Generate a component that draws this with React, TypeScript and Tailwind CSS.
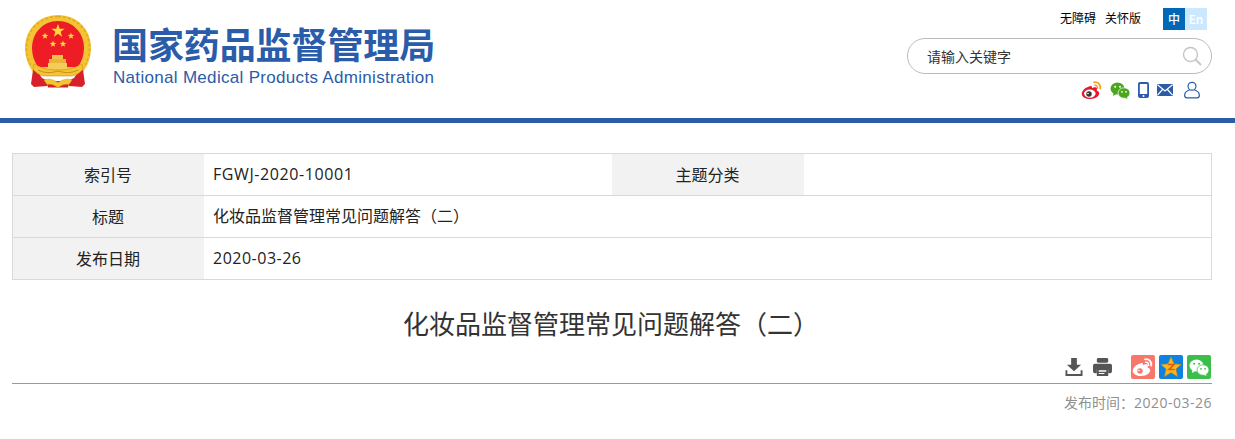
import React from "react";

const CJK = "font-['Noto_Sans_CJK_SC','Microsoft_YaHei',sans-serif]";
const MIX = "font-['Open_Sans','Noto_Sans_CJK_SC',sans-serif]";

function Star({ x, y, r, fill = "#ffd83b" }: { x: number; y: number; r: number; fill?: string }) {
  const pts: string[] = [];
  for (let i = 0; i < 10; i++) {
    const a = -Math.PI / 2 + (i * Math.PI) / 5;
    const rr = i % 2 === 0 ? r : r * 0.4;
    pts.push(`${(x + rr * Math.cos(a)).toFixed(2)},${(y + rr * Math.sin(a)).toFixed(2)}`);
  }
  return <polygon points={pts.join(" ")} fill={fill} />;
}

function Emblem() {
  return (
    <svg width="66" height="73" viewBox="0 0 66 73" className="shrink-0">
      <path d="M33 0C14 0 0 14 0 33c0 9 3 17 8 24h50c5-7 8-15 8-24C66 14 52 0 33 0z" fill="#f3c433" />
      <path d="M33 1.500C15 1.500 1.500 15 1.500 33c0 6 1.500 12 4 17" fill="none" stroke="#e2a824" strokeWidth="1.500" strokeDasharray="3 2" />
      <path d="M33 1.500C51 1.500 64.500 15 64.500 33c0 6-1.500 12-4 17" fill="none" stroke="#e2a824" strokeWidth="1.500" strokeDasharray="3 2" />
      <path d="M33 6C18 6 7 18 7 33c0 7 2 13 6 19h40c4-6 6-12 6-19C59 18 48 6 33 6z" fill="#ee1c25" />
      <Star x={33} y={16} r={7} />
      <Star x={20} y={21} r={3.500} />
      <Star x={46} y={21} r={3.500} />
      <Star x={28} y={29} r={3.500} />
      <Star x={38} y={29} r={3.500} />
      <path d="M27 40h11v4H27z" fill="#f0c24a" />
      <path d="M24 44h17v4H24z" fill="#e8b43a" />
      <path d="M23 48h19v6H23z" fill="#f4cc58" />
      <path d="M8 55l5 2 4 6 6 3-1 5-13 1-3-3z" fill="#d8202a" />
      <path d="M58 55l-5 2-4 6-6 3 1 5 13 1 3-3z" fill="#d8202a" />
      <path d="M21 66h24l-2 6.500H23z" fill="#d8202a" />
      <path d="M9 49c6 3 11 6 24 6s18-3 24-6l1 5c-3 4-8 7-12 7H20c-4 0-9-3-12-7z" fill="#f3c433" stroke="#d0901a" strokeWidth=".6" />
      <path d="M13 55c6 3 12 3.500 20 1 8 2.500 14 2 20-1" fill="none" stroke="#c9851a" strokeWidth=".9" />
      <path d="M19 65c5-2 10 0 14 2.500 4-2.500 9-4.500 14-2.500l-3 4.500c-4-.8-7 .5-11 3-4-2.500-7-3.800-11-3z" fill="#f3c433" stroke="#d0901a" strokeWidth=".5" />
    </svg>
  );
}

function WeiboMark({ eye = "#333", body = "#e6162d", swirl = "#f5a623" }: { eye?: string; body?: string; swirl?: string }) {
  return (
    <svg width="22" height="20" viewBox="0 0 22 20">
      <path d="M9 6.200C4.500 7 .5 11 .8 14c.3 3.500 4.500 5.200 8.700 5 4.700-.2 8.500-2.500 8.700-5.500.1-1.600-1.100-2.600-2.500-3 .6-1.600.3-2.800-.7-3.200-1.200-.4-2.900.1-4 .9.300-1.500-.4-3-2-2z" fill={body} />
      <ellipse cx="8.800" cy="13.600" rx="5.800" ry="4.200" fill="#fff" />
      <circle cx="8" cy="14" r="2.700" fill={eye} />
      <circle cx="7" cy="13.500" r=".8" fill="#fff" />
      <path d="M13 2.300c3.800-.8 7 2.500 6.200 6.400" fill="none" stroke={swirl} strokeWidth="1.800" strokeLinecap="round" />
      <path d="M13.700 5.200c1.800-.3 3.200 1.200 2.900 3" fill="none" stroke={swirl} strokeWidth="1.500" strokeLinecap="round" />
    </svg>
  );
}

function WechatMark({ c = "#4aa61c", inner = "#fff", size = 20 }: { c?: string; inner?: string; size?: number }) {
  return (
    <svg width={size} height={size * 0.85} viewBox="0 0 20 17">
      <ellipse cx="7.500" cy="6.500" rx="7" ry="6" fill={c} />
      <path d="M3.500 10.500L3 14l3.500-2z" fill={c} />
      <circle cx="5.200" cy="4.800" r="1" fill={inner} />
      <circle cx="10" cy="4.800" r="1" fill={inner} />
      <ellipse cx="14" cy="11" rx="6" ry="5.200" fill={c} stroke={inner} strokeWidth=".7" />
      <path d="M16.500 14.500l1 2.500-3-1.500z" fill={c} />
      <circle cx="12" cy="9.800" r=".9" fill={inner} />
      <circle cx="16" cy="9.800" r=".9" fill={inner} />
    </svg>
  );
}

function HeaderIcons() {
  return (
    <div className="mt-[6px] flex h-[20px] items-center justify-end pr-[12px]">
      <WeiboMark />
      <span className="ml-[7px]"><WechatMark /></span>
      <svg className="ml-[8px]" width="11" height="16" viewBox="0 0 11 16">
        <rect x="0" y="0" width="11" height="16" rx="2" fill="#2a5caa" />
        <rect x="1.800" y="2" width="7.400" height="10" fill="#fff" />
        <circle cx="5.500" cy="14" r="1" fill="#fff" />
      </svg>
      <svg className="ml-[8px]" width="16" height="12" viewBox="0 0 16 12">
        <rect width="16" height="12" rx="1" fill="#2a5caa" />
        <path d="M.5 .8L8 7l7.500-6.200M.5 11.200L5.500 5.500M15.500 11.200L10.500 5.500" fill="none" stroke="#fff" strokeWidth="1.200" />
      </svg>
      <svg className="ml-[11px]" width="16" height="18" viewBox="0 0 17 18" fill="none" stroke="#2a5caa" strokeWidth="1.300">
        <circle cx="8.500" cy="5" r="4.200" />
        <path d="M6 9c-3 .8-5.300 2.800-5.300 5.500 0 1.700 1 2.800 2.500 2.800h10.600c1.500 0 2.500-1.100 2.500-2.800C16.300 11.800 14 9.800 11 9" />
      </svg>
    </div>
  );
}

function Header() {
  return (
    <header className="flex h-[123px] justify-between border-b-[5px] border-[#2a5caa] pl-[25px] pr-[23px]">
      <div className="flex pt-[15px]">
        <Emblem />
        <div className="ml-[21px] flex flex-col pt-[3px]">
          <div className={`${CJK} text-[36px] leading-[50px] font-bold tracking-[-0.1px] whitespace-nowrap text-[#2a5caa]`}>
            国家药品监督管理局
          </div>
          <div className="ml-[1px] font-['Liberation_Sans',sans-serif] text-[17px] leading-[20px] tracking-[0.31px] whitespace-nowrap text-[#2a5caa]">
            National Medical Products Administration
          </div>
        </div>
      </div>
      <div className="flex w-[305px] flex-col">
        <div className="flex h-[30px] items-end justify-end pr-[5px]">
          <span className={`${CJK} mr-[9px] mb-[4px] text-[12px] leading-[16px] text-black`}>无障碍</span>
          <span className={`${CJK} mr-[22px] mb-[4px] text-[12px] leading-[16px] text-black`}>关怀版</span>
          <span className={`${CJK} h-[22px] w-[22px] bg-[#0068b7] text-center text-[12px] leading-[22px] font-medium text-white`}>中</span>
          <span className={`${CJK} h-[22px] w-[22px] bg-[#cce8ff] text-center text-[12px] leading-[22px] font-medium text-white`}>En</span>
        </div>
        <div className="mt-[8px] flex h-[36px] items-center justify-between rounded-[18px] border border-[#bbbbbb] pr-[9px] pl-[19px]">
          <span className={`${CJK} mb-[1px] text-[14px] leading-[20px] text-[#333333]`}>请输入关键字</span>
          <svg width="20" height="20" viewBox="0 0 20 20" fill="none" stroke="#c4c4c4">
            <circle cx="8.500" cy="8.500" r="7" strokeWidth="1.400" />
            <path d="M13.500 13.500L19 19" strokeWidth="1.800" />
          </svg>
        </div>
        <HeaderIcons />
      </div>
    </header>
  );
}

const labelCell = `${CJK} flex w-[191px] shrink-0 items-center justify-center bg-[#f2f2f2] pr-[1px] pb-[2px] text-[16px] text-[#222222]`;
const valueCell = `${MIX} flex items-center pb-[2px] pl-[9px] text-[16px] text-[#222222]`;

function InfoTable() {
  return (
    <div className="mt-[30px] ml-[12px] flex h-[127px] w-[1200px] flex-col border border-[#d9d9d9]">
      <div className="flex h-[42px] border-b border-[#d9d9d9]">
        <div className={labelCell}>索引号</div>
        <div className={`${valueCell} w-[408px] tracking-[0.6px]`}>FGWJ-2020-10001</div>
        <div className={`${CJK} flex w-[192px] shrink-0 items-center justify-center bg-[#f2f2f2] pr-[1px] pb-[2px] text-[16px] text-[#222222]`}>主题分类</div>
        <div className={`${valueCell} flex-1`} />
      </div>
      <div className="flex h-[42px] border-b border-[#d9d9d9]">
        <div className={labelCell}>标题</div>
        <div className={`${valueCell} flex-1`}>化妆品监督管理常见问题解答（二）</div>
      </div>
      <div className="flex flex-1">
        <div className={labelCell}>发布日期</div>
        <div className={`${valueCell} flex-1 tracking-[0.5px]`}>2020-03-26</div>
      </div>
    </div>
  );
}

function ToolIcons() {
  return (
    <div className="mt-[12px] ml-[12px] flex h-[29px] w-[1200px] items-start justify-end border-b border-[#999999] pr-[1px]">
      <svg className="mt-[3px]" width="18" height="18" viewBox="0 0 18 19" fill="#555555">
        <path d="M6 0h6v7h4.500L9 14 1.500 7H6z" />
        <path d="M0 13h2v4h14v-4h2v6H0z" />
      </svg>
      <svg className="mt-[3px] ml-[10px]" width="19" height="18" viewBox="0 0 20 19" fill="#555555">
        <rect x="4" y="0" width="12" height="5" rx="1.500" />
        <path d="M2 6h16a2 2 0 012 2v6a2 2 0 01-2 2h-2v-4H4v4H2a2 2 0 01-2-2V8a2 2 0 012-2z" />
        <path d="M4 11h12v8H4z" />
        <path d="M6 13h8v1.500H6zM6 15.800h6v1.200H6z" fill="#ffffff" />
      </svg>
      <div className="ml-[19px] flex h-[24px] w-[24px] items-center justify-center rounded-[2px] bg-[#f7776b]">
        <WeiboMark eye="#f7776b" body="#ffffff" swirl="#ffffff" />
      </div>
      <div className="ml-[4px] flex h-[24px] w-[24px] items-center justify-center rounded-[2px] bg-[#0e82e0]">
        <svg width="22" height="22" viewBox="0 0 22 22">
          <polygon points="11,1 14,8 21,8.500 15.800,13 17.500,20.500 11,16.500 4.500,20.500 6.200,13 1,8.500 8,8" fill="#f8b81c" stroke="#d98a10" strokeWidth=".6" />
          <path d="M8 8.500h6l-5 5h5.500" fill="none" stroke="#d9600f" strokeWidth="1.600" />
        </svg>
      </div>
      <div className="ml-[4px] flex h-[24px] w-[24px] items-center justify-center rounded-[2px] bg-[#3cbf4a]">
        <WechatMark c="#ffffff" inner="#3cbf4a" size={20} />
      </div>
    </div>
  );
}

export default function App() {
  return (
    <div className="h-[439px] w-[1235px] overflow-hidden bg-white">
      <Header />
      <InfoTable />
      <h1 className={`${CJK} mt-[23px] ml-[11px] h-[40px] w-[1200px] text-center text-[26px] leading-[40px] font-normal text-[#333333]`}>
        化妆品监督管理常见问题解答（二）
      </h1>
      <ToolIcons />
      <div className={`${MIX} mt-[9px] ml-[12px] w-[1200px] text-right text-[14px] leading-[20px] text-[#8f8f8f]`}>
        发布时间：<span className="tracking-[0.5px]">2020-03-26</span>
      </div>
    </div>
  );
}
